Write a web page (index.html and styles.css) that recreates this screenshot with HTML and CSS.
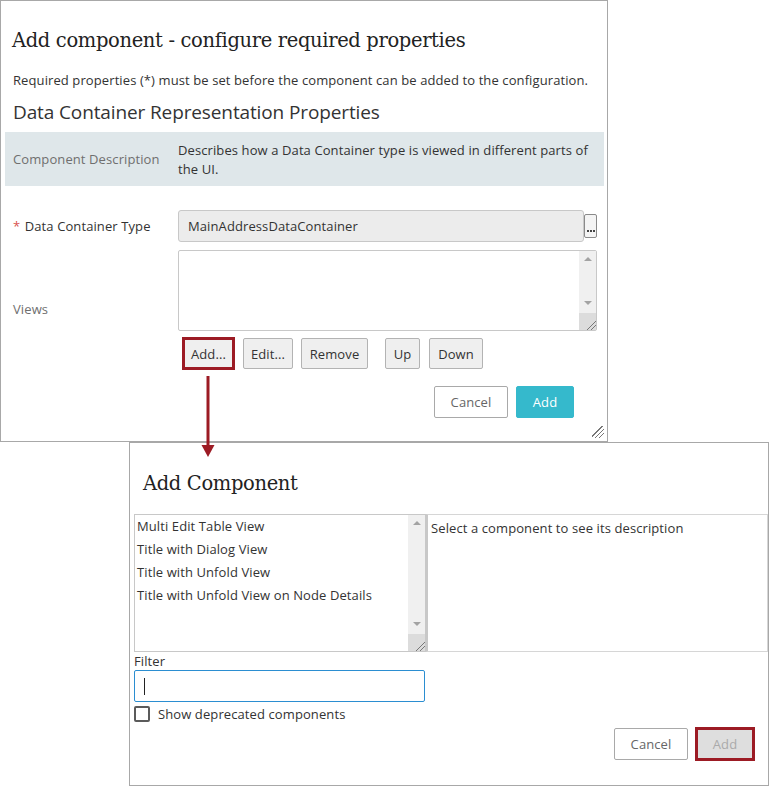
FILE: index.html
```html
<!DOCTYPE html>
<html>
<head>
<meta charset="utf-8">
<link rel="stylesheet" href="styles.css">
</head>
<body>
<div class="stage">
  <div class="dlg dlg1">
    <h1 class="title">Add component - configure required properties</h1>
    <p class="intro">Required properties (*) must be set before the component can be added to the configuration.</p>
    <h2 class="section">Data Container Representation Properties</h2>
    <div class="desc">
      <div class="desc-label">Component Description</div>
      <div class="desc-text">Describes how a Data Container type is viewed in different parts of the UI.</div>
    </div>
    <div class="row row-dct">
      <div class="label"><span class="req">*</span> Data Container Type</div>
      <div class="value dct">
        <div class="ro-input">MainAddressDataContainer</div>
        <div class="dots"><i></i><i></i><i></i></div>
      </div>
    </div>
    <div class="row row-views">
      <div class="label label-views">Views</div>
      <div class="value">
        <div class="listbox views-box">
          <div class="list-body"></div>
          <div class="vscroll">
            <span class="arr up"></span>
            <span class="arr down"></span>
            <span class="grip"></span>
          </div>
        </div>
      </div>
    </div>
    <div class="row row-btns">
      <div class="label"></div>
      <div class="value btns">
        <button class="btn hl b-add">Add...</button>
        <button class="btn b-edit">Edit...</button>
        <button class="btn b-remove">Remove</button>
        <button class="btn b-up">Up</button>
        <button class="btn b-down">Down</button>
      </div>
    </div>
    <div class="footer footer1">
      <button class="fbtn cancel">Cancel</button>
      <button class="fbtn primary">Add</button>
    </div>
    <span class="corner-grip"></span>
  </div>

  <div class="dlg dlg2">
    <h1 class="title title2">Add Component</h1>
    <div class="panes">
      <div class="listbox comp-list">
        <div class="list-body items">
          <div class="item">Multi Edit Table View</div>
          <div class="item">Title with Dialog View</div>
          <div class="item">Title with Unfold View</div>
          <div class="item">Title with Unfold View on Node Details</div>
        </div>
        <div class="vscroll">
          <span class="arr up"></span>
          <span class="arr down"></span>
          <span class="grip"></span>
        </div>
      </div>
      <div class="comp-desc">Select a component to see its description</div>
    </div>
    <div class="filter-label">Filter</div>
    <div class="filter-input"><span class="caret"></span></div>
    <label class="check-row"><span class="checkbox"></span><span>Show deprecated components</span></label>
    <div class="footer footer2">
      <button class="fbtn cancel">Cancel</button>
      <button class="fbtn disabled hl2">Add</button>
    </div>
  </div>

  <svg class="arrow" width="20" height="84" viewBox="0 0 20 84">
    <line x1="10" y1="0" x2="10" y2="72" stroke="#9c1b24" stroke-width="3"/>
    <polygon points="3.5,69 16.5,69 10,81" fill="#9c1b24"/>
  </svg>
</div>
</body>
</html>
```

FILE: styles.css
```css
* { box-sizing: border-box; }
html, body { margin: 0; padding: 0; background: #fff; }
body {
  font-family: "Open Sans", "Noto Sans", sans-serif;
  font-size: 13px;
  letter-spacing: 0.1px;
  color: #333;
  width: 769px;
  height: 786px;
  overflow: hidden;
}
.stage { position: relative; width: 769px; height: 786px; }

.dlg {
  position: relative;
  background: #fff;
  border: 1px solid #a8a8a8;
}
.dlg1 { width: 608px; height: 442px; }
.dlg2 { width: 640px; height: 344px; margin-left: 129px; }

.title {
  margin: 0;
  padding: 26px 0 0 11px;
  font-family: "DejaVu Serif", "Liberation Serif", serif;
  font-weight: normal;
  font-size: 19.5px;
  line-height: 28px;
  color: #222;
  letter-spacing: -0.35px;
}
.intro {
  margin: 16px 0 0 12px;
  line-height: 18px;
  color: #333;
}
.section {
  margin: 10px 0 0 12px;
  font-weight: normal;
  font-size: 19px;
  line-height: 26px;
  color: #333;
  letter-spacing: -0.12px;
}
.desc {
  margin: 7px 3px 0 4px;
  height: 54px;
  background: #dfe7ea;
  display: grid;
  grid-template-columns: 165px 1fr;
  align-items: center;
  padding: 0 10px 0 8px;
}
.desc-label { color: #6f6f6f; }
.desc-text { line-height: 19px; padding-top: 1px; }

.row {
  display: grid;
  grid-template-columns: 177px 419px;
}
.label { padding-left: 12px; }
.req { color: #d9534f; margin-right: 1px; }
.row-dct { margin-top: 24px; height: 32px; align-items: center; }
.dct { display: flex; align-items: center; }
.ro-input {
  width: 406px;
  height: 32px;
  background: #ececec;
  border: 1px solid #c8c8c8;
  border-radius: 3px;
  padding: 0 9px;
  line-height: 30px;
}
.dots {
  width: 13px;
  height: 24px;
  border: 1px solid #8a8a8a;
  border-radius: 2px;
  background: #f4f4f4;
  display: flex;
  justify-content: center;
  align-items: flex-end;
  gap: 1px;
  padding-bottom: 5px;
}
.dots i {
  display: block;
  width: 2px;
  height: 2px;
  background: #444;
}

.row-views { margin-top: 8px; }
.label-views { padding-top: 50px; color: #6f6f6f; }
.listbox {
  display: flex;
  border: 1px solid #c8c8c8;
  background: #fff;
}
.views-box { width: 419px; height: 81px; border-radius: 2px; }
.list-body { flex: 1; }
.vscroll {
  width: 17px;
  background: #f0f0f0;
  position: relative;
  display: flex;
  flex-direction: column;
}
.arr {
  display: block;
  width: 0; height: 0;
  margin: 0 auto;
  border-left: 4px solid transparent;
  border-right: 4px solid transparent;
}
.arr.up { border-bottom: 4px solid #a3a3a3; margin-top: 6px; }
.arr.down { border-top: 4px solid #a3a3a3; margin-top: auto; margin-bottom: 8px; }
.grip {
  display: block;
  height: 17px;
  background: #dcdcdc linear-gradient(135deg, transparent 17px, #777 17px, #777 18px, transparent 18px, transparent 20px, #777 20px, #777 21px, transparent 21px);
}

.row-btns { margin-top: 6px; height: 31px; }
.btns { display: flex; align-items: center; }
.btn {
  height: 31px;
  background: #efefef;
  border: 1px solid #b3b3b3;
  border-radius: 2px;
  font-family: inherit;
  font-size: 13px;
  letter-spacing: inherit;
  color: #333;
  padding: 0;
}
.hl { border: 3px solid #9c1b24; border-radius: 0; width: 53px; height: 33px; margin-left: 4px; }
.b-edit { width: 50px; margin-left: 8px; }
.b-remove { width: 67px; margin-left: 8px; }
.b-up { width: 35px; margin-left: 17px; }
.b-down { width: 54px; margin-left: 9px; }

.footer { display: flex; justify-content: flex-end; }
.footer1 { margin-top: 18px; padding-right: 33px; gap: 8px; }
.fbtn {
  height: 32px;
  font-family: inherit;
  font-size: 13px;
  letter-spacing: inherit;
  border-radius: 2px;
  padding: 0;
}
.cancel { width: 74px; background: #fff; border: 1px solid #a9a9a9; color: #666; }
.primary { width: 58px; background: #35b9cc; border: 1px solid #35b9cc; color: #fff; }

.corner-grip {
  position: absolute;
  right: 3px;
  bottom: 3px;
  width: 12px;
  height: 12px;
  background: linear-gradient(135deg, transparent 7px, #777 7px, #777 8px, transparent 8px, transparent 10px, #777 10px, #777 11px, transparent 11px, transparent 13px, #777 13px, #777 14px, transparent 14px);
}

/* dialog 2 */
.title2 { padding: 27px 0 0 13px; }
.panes { display: flex; margin: 16px 0 0 4px; height: 138px; }
.comp-list { width: 292px; height: 138px; }
.item { line-height: 23px; padding-left: 2px; color: #333; }
.comp-desc {
  width: 342px;
  height: 138px;
  border: 1px solid #d6d6d6;
  border-left: 2px solid #c8c8c8;
  padding: 4px 0 0 3px;
}
.filter-label { margin: 0 0 0 4px; line-height: 18px; }
.filter-input {
  margin: 0 0 0 4px;
  width: 291px;
  height: 32px;
  border: 1px solid #2b8ed1;
  border-radius: 2px;
  position: relative;
}
.caret {
  position: absolute;
  left: 9px;
  top: 7px;
  width: 1px;
  height: 17px;
  background: #222;
}
.check-row {
  display: flex;
  align-items: center;
  margin: 4px 0 0 4px;
  height: 16px;
}
.checkbox {
  width: 16px;
  height: 16px;
  border: 2px solid #5b5b5b;
  border-radius: 2px;
  margin-right: 8px;
}
.footer2 { margin-top: 5px; padding-right: 13px; gap: 7px; align-items: center; }
.disabled { width: 60px; height: 34px; background: #dedede; color: #aaa; }
.hl2 { border: 3px solid #9c1b24; border-radius: 0; }

.arrow { position: absolute; left: 198px; top: 376px; }
```
